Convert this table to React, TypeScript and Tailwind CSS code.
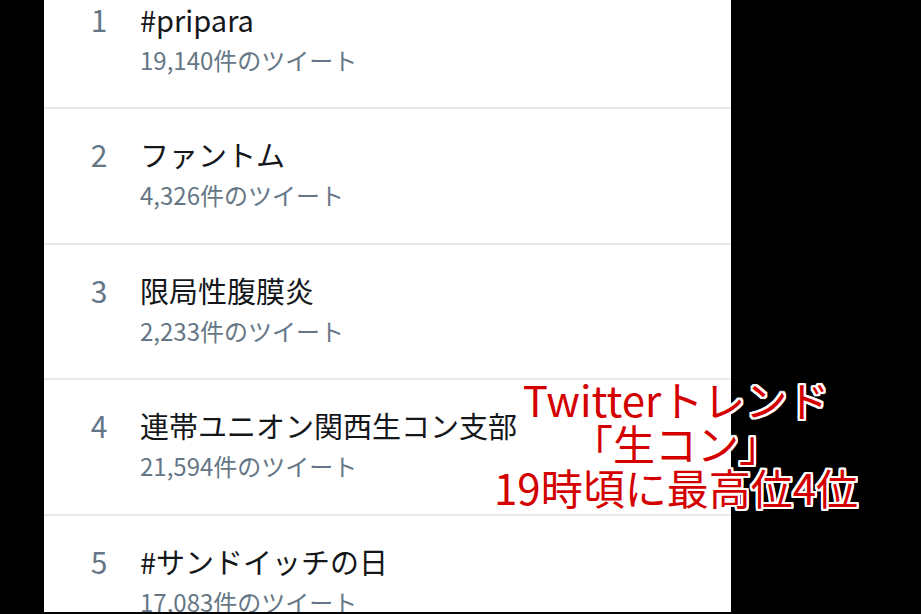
import React from "react";

const rows = [
  { n: "1", title: "#pripara", count: "19,140件のツイート" },
  { n: "2", title: "ファントム", count: "4,326件のツイート" },
  { n: "3", title: "限局性腹膜炎", count: "2,233件のツイート" },
  { n: "4", title: "連帯ユニオン関西生コン支部", count: "21,594件のツイート" },
  { n: "5", title: "#サンドイッチの日", count: "17,083件のツイート" },
];

const outline =
  "[text-shadow:2px_0_0_#fff,-2px_0_0_#fff,0_2px_0_#fff,0_-2px_0_#fff,2px_2px_0_#fff,-2px_-2px_0_#fff,2px_-2px_0_#fff,-2px_2px_0_#fff,1px_2px_0_#fff,-1px_2px_0_#fff,1px_-2px_0_#fff,-1px_-2px_0_#fff,2px_1px_0_#fff,-2px_1px_0_#fff,2px_-1px_0_#fff,-2px_-1px_0_#fff]";

export default function App() {
  return (
    <div
      className="relative w-[921px] h-[614px] overflow-hidden bg-black"
      style={{ fontFamily: "'Noto Sans CJK JP', 'Noto Sans', sans-serif" }}
    >
      <div className="ml-[44px] w-[687px] h-[612px] bg-white overflow-hidden">
        <div className="mt-[-26.5px] flex flex-col">
          {rows.map((r) => (
            <div
              key={r.n}
              className="h-[135.5px] shrink-0 border-b-2 border-[#e8e8ea] flex pl-[40px] pt-[27px]"
            >
              <div className="w-[30px] text-center text-[30px] leading-[36px] text-[#657786]">
                {r.n}
              </div>
              <div className="ml-[26px] flex flex-col">
                <div className="text-[29px] leading-[36px] text-[#14171a] whitespace-nowrap">
                  {r.title}
                </div>
                <div className="mt-[8px] text-[24px] leading-[30px] text-[#657786] whitespace-nowrap">
                  {r.count}
                </div>
              </div>
            </div>
          ))}
        </div>
      </div>
      <div
        className={`absolute left-[476px] top-[377px] w-[400px] text-center text-[42px] leading-[44px] text-[#d40000] whitespace-nowrap ${outline}`}
      >
        <div>Twitterトレンド</div>
        <div>「生コン」</div>
        <div>19時頃に最高位4位</div>
      </div>
    </div>
  );
}
